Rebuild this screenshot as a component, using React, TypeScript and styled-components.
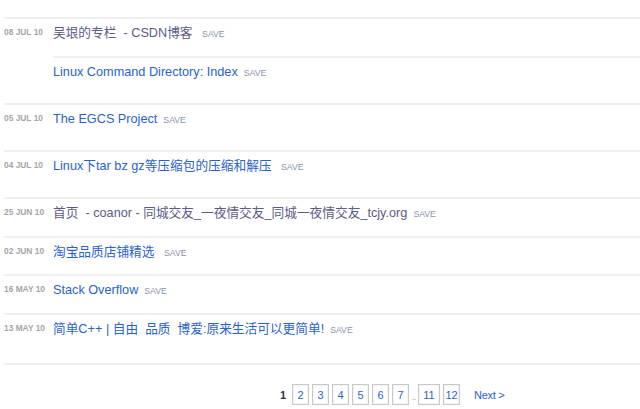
import React from "react";
import styled, { createGlobalStyle } from "styled-components";

const Global = createGlobalStyle`
  html, body { margin: 0; padding: 0; background: #fff; }
  body { font-family: "Liberation Sans", Arial, "Noto Sans CJK SC", sans-serif; }
`;

const Page = styled.div`
  width: 640px;
  height: 409px;
  overflow: hidden;
  padding: 17px 0 0 4px;
  box-sizing: border-box;
`;

const List = styled.div`
  display: flex;
  flex-direction: column;
  border-bottom: 2px solid #f0f0f0;
`;

const Entry = styled.div`
  display: grid;
  grid-template-columns: 49px 1fr;
  border-top: 2px solid #f0f0f0;
`;

const DateCell = styled.div`
  padding-top: 5px;
  font-size: 8.4px;
  line-height: 16px;
  font-weight: bold;
  color: #a5a5a5;
  white-space: nowrap;
`;

const Links = styled.div`
  display: flex;
  flex-direction: column;
`;

const LinkRow = styled.div<{ $h: number; $sub?: boolean }>`
  height: ${(p) => p.$h}px;
  box-sizing: border-box;
  padding-top: 6px;
  border-top: ${(p) => (p.$sub ? "2px solid #f0f0f0" : "none")};
  display: flex;
  align-items: baseline;
  white-space: nowrap;
`;

const Title = styled.a<{ $visited?: boolean }>`
  font-size: 12.7px;
  line-height: 16px;
  color: ${(p) => (p.$visited ? "#5b5b86" : "#2a62cc")};
  text-decoration: none;
  font-family: "Liberation Sans", Arial, "Noto Sans CJK SC", sans-serif;
`;

const Save = styled.span`
  margin-left: 6px;
  font-size: 8.7px;
  color: #8a93ab;
`;

const Pager = styled.div`
  display: flex;
  align-items: center;
  gap: 3px;
  padding: 19px 0 0 276px;
  font-size: 11px;
`;

const Current = styled.span`
  font-weight: bold;
  color: #333;
  margin-right: 3px;
`;

const PageBox = styled.a<{ $wide?: boolean }>`
  display: inline-flex;
  align-items: center;
  justify-content: center;
  box-sizing: border-box;
  width: ${(p) => (p.$wide ? 22 : 17)}px;
  height: 21px;
  border: 1px solid #c9c9c9;
  box-shadow: inset 0 0 0 1px #f4f4f4;
  color: #2a62cc;
  text-decoration: none;
`;

const Dots = styled.span`
  color: #999;
  font-size: 8px;
  letter-spacing: -0.6px;
  padding-top: 6px;
  margin: 0 -1px;
`;

const Next = styled.a`
  margin-left: 11px;
  color: #2a62cc;
  text-decoration: none;
  font-size: 11px;
  letter-spacing: -0.3px;
`;

type LinkItem = { title: string; visited?: boolean; h: number };
type EntryData = { date: string; links: LinkItem[] };

const entries: EntryData[] = [
  {
    date: "08 JUL 10",
    links: [
      { title: "吴垠的专栏 \u00a0- CSDN博客\u00a0", visited: true, h: 37 },
      { title: "Linux Command Directory: Index", h: 47 },
    ],
  },
  { date: "05 JUL 10", links: [{ title: "The EGCS Project", h: 45 }] },
  { date: "04 JUL 10", links: [{ title: "Linux下tar bz gz等压缩包的压缩和解压\u00a0", h: 45 }] },
  {
    date: "25 JUN 10",
    links: [{ title: "首页 \u00a0- coanor - 同城交友_一夜情交友_同城一夜情交友_tcjy.org", visited: true, h: 37 }],
  },
  { date: "02 JUN 10", links: [{ title: "淘宝品质店铺精选\u00a0", h: 36 }] },
  { date: "16 MAY 10", links: [{ title: "Stack Overflow", h: 37 }] },
  { date: "13 MAY 10", links: [{ title: "简单C++ | 自由 \u00a0品质 \u00a0博爱:原来生活可以更简单!", h: 48 }] },
];

export default function App() {
  return (
    <Page>
      <Global />
      <List>
        {entries.map((e) => (
          <Entry key={e.date}>
            <DateCell>{e.date}</DateCell>
            <Links>
              {e.links.map((l, i) => (
                <LinkRow key={l.title} $h={l.h} $sub={i > 0}>
                  <Title href="#" $visited={l.visited}>
                    {l.title}
                  </Title>
                  <Save>SAVE</Save>
                </LinkRow>
              ))}
            </Links>
          </Entry>
        ))}
      </List>
      <Pager>
        <Current>1</Current>
        {["2", "3", "4", "5", "6", "7"].map((n) => (
          <PageBox key={n} href="#">
            {n}
          </PageBox>
        ))}
        <Dots>...</Dots>
        <PageBox href="#" $wide>
          11
        </PageBox>
        <PageBox href="#">12</PageBox>
        <Next href="#">Next &gt;</Next>
      </Pager>
    </Page>
  );
}
